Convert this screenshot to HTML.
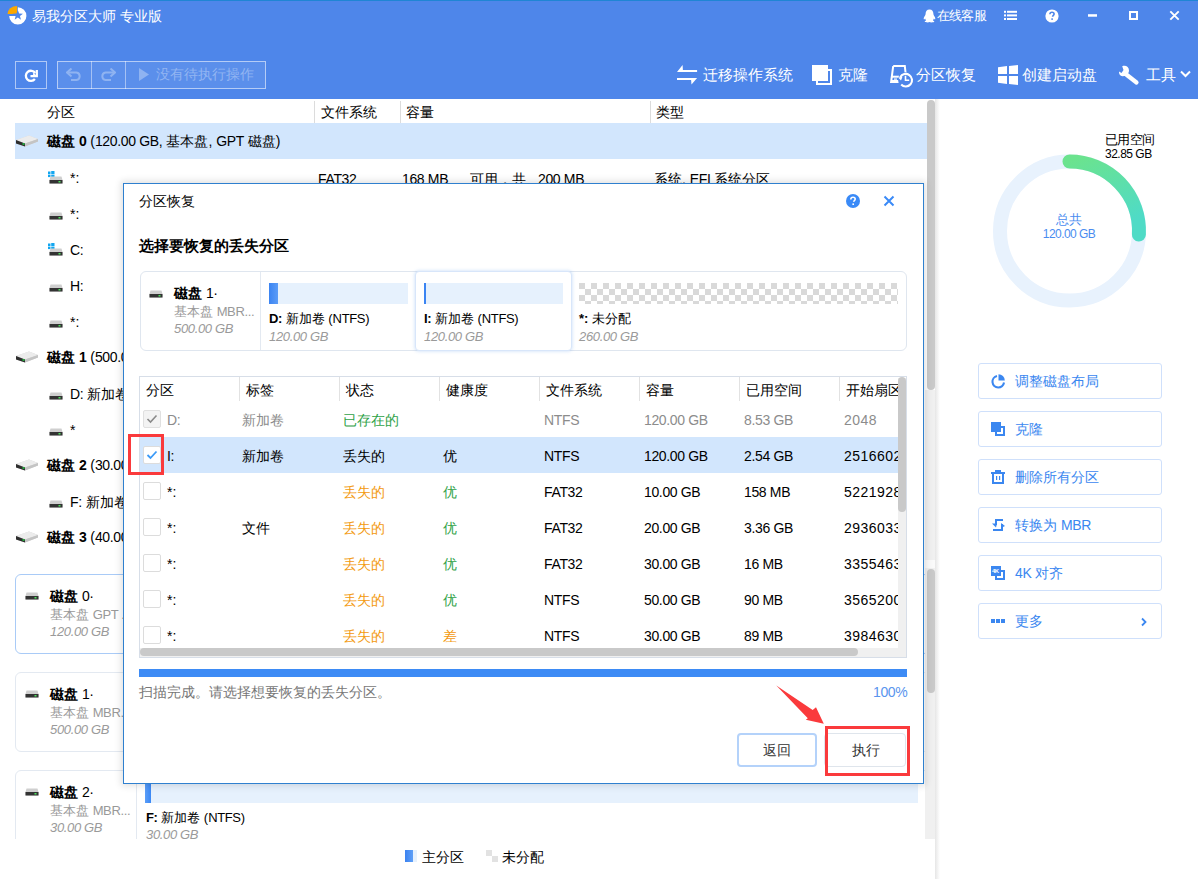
<!DOCTYPE html>
<html><head><meta charset="utf-8">
<style>
*{box-sizing:border-box;margin:0;padding:0}
html,body{width:1198px;height:879px;overflow:hidden;background:#fff}
body{position:relative;font-family:"Liberation Sans",sans-serif;font-size:14px;color:#000}
.a{position:absolute;white-space:nowrap}
#top{position:absolute;left:0;top:0;width:1198px;height:99px;background:#4e86ea;border-top:1px solid #1f85d4}
.w{color:#fff}
.tb{position:absolute;top:61px;height:28px;border:1px solid rgba(255,255,255,.55)}
.lrow{position:absolute;left:0;width:927px;height:36px}
.dk{font-weight:bold}
.card{position:absolute;border:1px solid #e3e9f1;border-radius:6px;background:#fff}
.grey{color:#999}
.it{font-style:italic;color:#9a9a9a}
.rbtn{position:absolute;left:978px;width:184px;height:36px;border:1px solid #cfe0fb;border-radius:3px;color:#3b87f0}
.rbtn .t{position:absolute;left:36px;top:9px;font-size:14px}
.rbtn svg{position:absolute;left:12px;top:10px}
.l{letter-spacing:-0.35px}
</style></head><body>

<!-- Title bar -->
<div id="top"></div>
<svg class="a" style="left:0;top:0" width="34" height="30" viewBox="0 0 34 30">
<path d="M17.8 15.9 V7.300000000000001 A8.6 8.6 0 1 1 9.200000000000001 15.9 Z" fill="#fff"/>
<path d="M17.1 14.1 H7.5 A9.6 8.2 0 0 1 17.1 5.9 Z" fill="#fba800"/>
<path d="M17.80 9.90 L19.15 13.44 L22.94 13.63 L19.99 16.01 L20.97 19.67 L17.80 17.60 L14.63 19.67 L15.61 16.01 L12.66 13.63 L16.45 13.44 Z" fill="#4e86ea"/>
</svg>
<div class="a w" style="left:32px;top:8px;font-size:14px">易我分区大师 专业版</div>

<svg class="a" style="left:923px;top:9px" width="13" height="14" viewBox="0 0 13 14"><path d="M6.5 0.5C3.8 0.5 2.6 2.6 2.6 4.8c0 1-.6 1.8-1.3 3-.8 1.3-.7 2.6-.2 2.7.4.1.8-.5 1-.9.2.8.6 1.4 1 1.9-.8.3-1.4.7-1.4 1.1 0 .6 1.5.9 3 .9 .8 0 1.4-.2 1.8-.4.4.2 1 .4 1.8.4 1.5 0 3-.3 3-.9 0-.4-.6-.8-1.4-1.1.4-.5.8-1.1 1-1.9.2.4.6 1 1 .9.5-.1.6-1.4-.2-2.7-.7-1.2-1.3-2-1.3-3C10.4 2.6 9.2.5 6.5.5z" fill="#fff"/></svg>
<div class="a w" style="left:937px;top:7px;font-size:13px;letter-spacing:-0.8px">在线客服</div>
<svg class="a" style="left:1004px;top:10px" width="14" height="11" viewBox="0 0 14 11"><g fill="#fff"><rect x="0" y="0.8" width="2" height="2"/><rect x="3" y="0.8" width="10" height="2"/><rect x="0" y="4.4" width="2" height="2"/><rect x="3" y="4.4" width="10" height="2"/><rect x="0" y="8" width="2" height="2"/><rect x="3" y="8" width="10" height="2"/></g></svg>
<svg class="a" style="left:1045px;top:9px" width="14" height="14" viewBox="0 0 14 14"><circle cx="7" cy="7" r="6.6" fill="#fff"/><path d="M4.9 5.3c0-1.3.9-2.1 2.1-2.1 1.3 0 2.1.8 2.1 1.8 0 1.3-1.5 1.5-1.5 2.7" stroke="#4e86ea" stroke-width="1.6" fill="none"/><rect x="6.3" y="9.3" width="1.6" height="1.6" fill="#4e86ea"/></svg>
<svg class="a" style="left:1086px;top:10px" width="14" height="10"><rect x="2" y="4.2" width="9" height="2.5" fill="#fff"/></svg>
<div class="a" style="left:1129px;top:11px;width:9px;height:9px;border:2px solid #fff"></div>
<svg class="a" style="left:1169px;top:10px" width="11" height="11" viewBox="0 0 11 11"><path d="M1.3 1.3L9.7 9.7M9.7 1.3L1.3 9.7" stroke="#fff" stroke-width="1.9"/></svg>

<!-- Toolbar -->
<div class="tb" style="left:15px;width:32px"></div>
<svg class="a" style="left:20px;top:64px" width="22" height="22" viewBox="0 0 22 22"><path d="M15.2 9 A5.1 5.1 0 1 0 14.9 15.1" stroke="#fff" stroke-width="2.3" fill="none"/><path d="M16.8 7.2 V12.2 H11.6" stroke="#fff" stroke-width="2.3" fill="none" stroke-linecap="square"/><path d="M13.2 8.3 L16.8 12.2 L13 12.2 Z" fill="#fff"/></svg>
<div class="tb" style="left:57px;width:209px;background:rgba(255,255,255,.08)"></div>
<div class="a" style="left:91px;top:61px;width:1px;height:28px;background:rgba(255,255,255,.45)"></div>
<div class="a" style="left:125px;top:61px;width:1px;height:28px;background:rgba(255,255,255,.45)"></div>
<svg class="a" style="left:66px;top:68px" width="16" height="13" viewBox="0 0 16 13"><path d="M2 4.5H10.5A3.8 3.8 0 0 1 10.5 12H5" stroke="#8fb3f1" stroke-width="2" fill="none"/><path d="M5.5 0.5L1 4.5L5.5 8.5" stroke="#8fb3f1" stroke-width="2" fill="none"/></svg>
<svg class="a" style="left:100px;top:68px" width="16" height="13" viewBox="0 0 16 13"><path d="M14 4.5H5.5A3.8 3.8 0 0 0 5.5 12H11" stroke="#8fb3f1" stroke-width="2" fill="none"/><path d="M10.5 0.5L15 4.5L10.5 8.5" stroke="#8fb3f1" stroke-width="2" fill="none"/></svg>
<svg class="a" style="left:139px;top:68px" width="10" height="13" viewBox="0 0 10 13"><path d="M0 0L10 6.5L0 13Z" fill="#8fb3f1"/></svg>
<div class="a" style="left:156px;top:66px;font-size:14px;color:#92b5f2">没有待执行操作</div>

<!-- toolbar right -->
<svg class="a" style="left:672px;top:60px" width="30" height="30" viewBox="0 0 30 30"><path d="M5 12 L10.6 5 L10.9 10 H25.1 V12 Z" fill="#fff"/><path d="M25.1 18 L19.5 24.6 L19.1 20 H5 V18 Z" fill="#fff"/></svg>
<div class="a w" style="left:703px;top:66px;font-size:14.5px">迁移操作系统</div>
<svg class="a" style="left:806px;top:60px" width="30" height="30" viewBox="0 0 30 30"><rect x="6" y="5" width="16" height="16" fill="#fff"/><path d="M22 10 H25 V24 H11 V21" stroke="#fff" stroke-width="2" fill="none"/></svg>
<div class="a w" style="left:838px;top:66px;font-size:14.5px">克隆</div>
<svg class="a" style="left:884px;top:60px" width="34" height="30" viewBox="0 0 34 30"><path d="M9.2 6.1 H20.8 L21.6 13" stroke="#fff" stroke-width="2" fill="none"/><path d="M9.2 6.1 L7.1 22 H16" stroke="#fff" stroke-width="2" fill="none"/><path d="M7.5 16.7 H15" stroke="#fff" stroke-width="2"/><rect x="7" y="20" width="8" height="2" fill="#fff"/><rect x="10" y="18.5" width="3" height="1.2" fill="#fff"/>
<circle cx="21.5" cy="19.8" r="7.5" fill="#4e86ea"/><path d="M17.2 24.6 A6.3 6.3 0 1 0 16.2 17.2" stroke="#fff" stroke-width="2.1" fill="none"/><path d="M14.2 17.6 L18.5 16.8 L17 20.6 Z" fill="#fff"/><path d="M21.5 15.8 V20.3 H25.2" stroke="#fff" stroke-width="1.6" fill="none"/></svg>
<div class="a w" style="left:916px;top:66px;font-size:14.5px">分区恢复</div>
<svg class="a" style="left:994px;top:60px" width="30" height="30" viewBox="0 0 30 30"><g fill="#fff"><path d="M4 7.2 L13 6.1 V14 H4 Z"/><path d="M15 6.1 L24 5 V14 H15 Z"/><path d="M4 16 H13 V23.9 L4 22.8 Z"/><path d="M15 16 H24 V25 L15 23.9 Z"/></g></svg>
<div class="a w" style="left:1022px;top:66px;font-size:14.5px">创建启动盘</div>
<svg class="a" style="left:1114px;top:60px" width="30" height="30" viewBox="0 0 30 30"><path d="M11 13.5 L22.5 22.5" stroke="#fff" stroke-width="4.2" stroke-linecap="round"/><path d="M8.2 6.2 C11.5 5 15 6.5 15 10.5 C15 14 11.5 16.5 8.5 16.2 C6 16 4.8 14 5 11.5 L7.5 13 L9.5 10 L8.2 6.2 Z" fill="#fff"/></svg>
<div class="a w" style="left:1146px;top:66px;font-size:14.5px">工具</div>
<svg class="a" style="left:1180px;top:70px" width="11" height="8" viewBox="0 0 11 8"><path d="M1 1.5L5.5 6L10 1.5" stroke="#fff" stroke-width="2" fill="none"/></svg>

<!-- MAIN LIST -->
<div class="a" style="left:314px;top:101px;width:1px;height:22px;background:#dcdcdc"></div>
<div class="a" style="left:400px;top:101px;width:1px;height:22px;background:#dcdcdc"></div>
<div class="a" style="left:650px;top:101px;width:1px;height:22px;background:#dcdcdc"></div>
<div class="a" style="left:47px;top:104px">分区</div>
<div class="a" style="left:321px;top:104px">文件系统</div>
<div class="a" style="left:406px;top:104px">容量</div>
<div class="a" style="left:656px;top:104px">类型</div>
<div class="a" style="left:15px;top:123px;width:912px;height:36px;background:#d2e6fd"></div>
<svg class="a" style="left:16px;top:135px" width="23" height="12" viewBox="0 0 23 12"><path d="M0 5 L13 0.5 L22 4 L22 6.5 L9 11.5 L0 8.5 Z" fill="#d4d4d4"/><path d="M0 5 L13 0.5 L22 4 L9 8.5 Z" fill="#ececec"/><path d="M0 5 L9 8.5 L9 11.5 L0 8.5 Z" fill="#2e2e2e"/><path d="M9 8.5 L22 4 L22 6.5 L9 11.5 Z" fill="#c4c4c4"/><rect x="6.5" y="8" width="2" height="2" fill="#22a83a"/></svg>
<div class="a" style="left:47px;top:133px"><b>磁盘 <span class="l">0</span></b> (<span class="l">120.00 GB</span>, 基本盘, <span class="l">GPT</span> 磁盘)</div>
<svg class="a" style="left:48px;top:171px" width="16" height="14" viewBox="0 0 16 14"><g fill="#12a6f0"><rect x="0" y="0.5" width="2.5" height="2.5"/><rect x="3.2" y="0" width="3.3" height="3"/><rect x="0" y="3.6" width="2.5" height="2.5"/><rect x="3.2" y="3.6" width="3.3" height="3"/></g><path d="M2.5 5.5H13.5L14.5 9V12.5H1.5V9Z" fill="#cfcfcf"/><rect x="1.5" y="9" width="13" height="3.5" fill="#333"/><rect x="10.5" y="10" width="2" height="1.5" fill="#4ee25e"/></svg>
<div class="a" style="left:70px;top:170px">*:</div>
<div class="a" style="left:318px;top:171px"><span class="l">FAT32</span></div>
<div class="a" style="left:402px;top:171px"><span class="l">168 MB</span></div><div class="a" style="left:470px;top:171px">可用，共</div><div class="a" style="left:538px;top:171px"><span class="l">200 MB</span></div>
<div class="a" style="left:654px;top:171px">系统, <span class="l">EFI</span> 系统分区</div>
<svg class="a" style="left:49px;top:212px" width="14" height="8" viewBox="0 0 14 8"><path d="M1.5 0.5H12.5L13.5 4V7.5H0.5V4Z" fill="#cfcfcf"/><rect x="0.5" y="4" width="13" height="3.5" fill="#333"/><rect x="9.5" y="5" width="2" height="1.5" fill="#4ee25e"/></svg>
<div class="a" style="left:70px;top:206px">*:</div>
<svg class="a" style="left:48px;top:243px" width="16" height="14" viewBox="0 0 16 14"><g fill="#12a6f0"><rect x="0" y="0.5" width="2.5" height="2.5"/><rect x="3.2" y="0" width="3.3" height="3"/><rect x="0" y="3.6" width="2.5" height="2.5"/><rect x="3.2" y="3.6" width="3.3" height="3"/></g><path d="M2.5 5.5H13.5L14.5 9V12.5H1.5V9Z" fill="#cfcfcf"/><rect x="1.5" y="9" width="13" height="3.5" fill="#333"/><rect x="10.5" y="10" width="2" height="1.5" fill="#4ee25e"/></svg>
<div class="a" style="left:70px;top:242px"><span class="l">C:</span></div>
<svg class="a" style="left:49px;top:284px" width="14" height="8" viewBox="0 0 14 8"><path d="M1.5 0.5H12.5L13.5 4V7.5H0.5V4Z" fill="#cfcfcf"/><rect x="0.5" y="4" width="13" height="3.5" fill="#333"/><rect x="9.5" y="5" width="2" height="1.5" fill="#4ee25e"/></svg>
<div class="a" style="left:70px;top:278px"><span class="l">H:</span></div>
<svg class="a" style="left:49px;top:320px" width="14" height="8" viewBox="0 0 14 8"><path d="M1.5 0.5H12.5L13.5 4V7.5H0.5V4Z" fill="#cfcfcf"/><rect x="0.5" y="4" width="13" height="3.5" fill="#333"/><rect x="9.5" y="5" width="2" height="1.5" fill="#4ee25e"/></svg>
<div class="a" style="left:70px;top:314px">*:</div>
<svg class="a" style="left:16px;top:351px" width="23" height="12" viewBox="0 0 23 12"><path d="M0 5 L13 0.5 L22 4 L22 6.5 L9 11.5 L0 8.5 Z" fill="#d4d4d4"/><path d="M0 5 L13 0.5 L22 4 L9 8.5 Z" fill="#ececec"/><path d="M0 5 L9 8.5 L9 11.5 L0 8.5 Z" fill="#2e2e2e"/><path d="M9 8.5 L22 4 L22 6.5 L9 11.5 Z" fill="#c4c4c4"/><rect x="6.5" y="8" width="2" height="2" fill="#22a83a"/></svg>
<div class="a" style="left:47px;top:349px"><b>磁盘 <span class="l">1</span></b> (<span class="l">500.00 GB</span>, 基本盘, <span class="l">MBR</span> 磁盘)</div>
<svg class="a" style="left:49px;top:392px" width="14" height="8" viewBox="0 0 14 8"><path d="M1.5 0.5H12.5L13.5 4V7.5H0.5V4Z" fill="#cfcfcf"/><rect x="0.5" y="4" width="13" height="3.5" fill="#333"/><rect x="9.5" y="5" width="2" height="1.5" fill="#4ee25e"/></svg>
<div class="a" style="left:70px;top:386px"><span class="l">D:</span> 新加卷</div>
<svg class="a" style="left:49px;top:428px" width="14" height="8" viewBox="0 0 14 8"><path d="M1.5 0.5H12.5L13.5 4V7.5H0.5V4Z" fill="#cfcfcf"/><rect x="0.5" y="4" width="13" height="3.5" fill="#333"/><rect x="9.5" y="5" width="2" height="1.5" fill="#4ee25e"/></svg>
<div class="a" style="left:70px;top:422px">*</div>
<svg class="a" style="left:16px;top:459px" width="23" height="12" viewBox="0 0 23 12"><path d="M0 5 L13 0.5 L22 4 L22 6.5 L9 11.5 L0 8.5 Z" fill="#d4d4d4"/><path d="M0 5 L13 0.5 L22 4 L9 8.5 Z" fill="#ececec"/><path d="M0 5 L9 8.5 L9 11.5 L0 8.5 Z" fill="#2e2e2e"/><path d="M9 8.5 L22 4 L22 6.5 L9 11.5 Z" fill="#c4c4c4"/><rect x="6.5" y="8" width="2" height="2" fill="#22a83a"/></svg>
<div class="a" style="left:47px;top:457px"><b>磁盘 <span class="l">2</span></b> (<span class="l">30.00 GB</span>, 基本盘, <span class="l">MBR</span> 磁盘)</div>
<svg class="a" style="left:49px;top:500px" width="14" height="8" viewBox="0 0 14 8"><path d="M1.5 0.5H12.5L13.5 4V7.5H0.5V4Z" fill="#cfcfcf"/><rect x="0.5" y="4" width="13" height="3.5" fill="#333"/><rect x="9.5" y="5" width="2" height="1.5" fill="#4ee25e"/></svg>
<div class="a" style="left:70px;top:494px"><span class="l">F:</span> 新加卷</div>
<svg class="a" style="left:16px;top:531px" width="23" height="12" viewBox="0 0 23 12"><path d="M0 5 L13 0.5 L22 4 L22 6.5 L9 11.5 L0 8.5 Z" fill="#d4d4d4"/><path d="M0 5 L13 0.5 L22 4 L9 8.5 Z" fill="#ececec"/><path d="M0 5 L9 8.5 L9 11.5 L0 8.5 Z" fill="#2e2e2e"/><path d="M9 8.5 L22 4 L22 6.5 L9 11.5 Z" fill="#c4c4c4"/><rect x="6.5" y="8" width="2" height="2" fill="#22a83a"/></svg>
<div class="a" style="left:47px;top:529px"><b>磁盘 <span class="l">3</span></b> (<span class="l">40.00 GB</span>, 基本盘, <span class="l">MBR</span> 磁盘)</div>
<div class="a" style="left:0;top:562px;width:927px;height:277px;overflow:hidden">
<div class="card" style="left:15px;top:12px;width:915px;height:80px;border-color:#a9cbf7"></div>
<div class="a" style="left:136px;top:12px;width:1px;height:80px;background:#e3e9f1"></div>
<svg class="a" style="left:25px;top:30px" width="14" height="8" viewBox="0 0 14 8"><path d="M1.5 0.5H12.5L13.5 4V7.5H0.5V4Z" fill="#cfcfcf"/><rect x="0.5" y="4" width="13" height="3.5" fill="#333"/><rect x="9.5" y="5" width="2" height="1.5" fill="#4ee25e"/></svg>
<div class="a" style="left:50px;top:26px"><b>磁盘</b> <span class="l">0·</span></div>
<div class="a grey" style="left:50px;top:44px;font-size:13px">基本盘 <span class="l">GPT ...</span></div>
<div class="a it" style="left:50px;top:62px;font-size:13px"><span class="l">120.00 GB</span></div>
<div class="card" style="left:15px;top:110px;width:915px;height:80px;border-color:#e3e9f1"></div>
<div class="a" style="left:136px;top:110px;width:1px;height:80px;background:#e3e9f1"></div>
<svg class="a" style="left:25px;top:128px" width="14" height="8" viewBox="0 0 14 8"><path d="M1.5 0.5H12.5L13.5 4V7.5H0.5V4Z" fill="#cfcfcf"/><rect x="0.5" y="4" width="13" height="3.5" fill="#333"/><rect x="9.5" y="5" width="2" height="1.5" fill="#4ee25e"/></svg>
<div class="a" style="left:50px;top:124px"><b>磁盘</b> <span class="l">1·</span></div>
<div class="a grey" style="left:50px;top:142px;font-size:13px">基本盘 <span class="l">MBR...</span></div>
<div class="a it" style="left:50px;top:160px;font-size:13px"><span class="l">500.00 GB</span></div>
<div class="card" style="left:15px;top:208px;width:915px;height:80px;border-color:#e3e9f1"></div>
<div class="a" style="left:136px;top:208px;width:1px;height:80px;background:#e3e9f1"></div>
<svg class="a" style="left:25px;top:226px" width="14" height="8" viewBox="0 0 14 8"><path d="M1.5 0.5H12.5L13.5 4V7.5H0.5V4Z" fill="#cfcfcf"/><rect x="0.5" y="4" width="13" height="3.5" fill="#333"/><rect x="9.5" y="5" width="2" height="1.5" fill="#4ee25e"/></svg>
<div class="a" style="left:50px;top:222px"><b>磁盘</b> <span class="l">2·</span></div>
<div class="a grey" style="left:50px;top:240px;font-size:13px">基本盘 <span class="l">MBR...</span></div>
<div class="a it" style="left:50px;top:258px;font-size:13px"><span class="l">30.00 GB</span></div>
<div class="a" style="left:146px;top:220px;width:772px;height:21px;background:#e6f1fd"></div>
<div class="a" style="left:145px;top:220px;width:6px;height:21px;background:linear-gradient(90deg,#5b9ef8,#3b88f5)"></div>
<div class="a" style="left:146px;top:247px;font-size:13px"><b><span class="l">F:</span></b> 新加卷 (<span class="l">NTFS)</span></div>
<div class="a it" style="left:146px;top:265px;font-size:13px"><span class="l">30.00 GB</span></div>
</div>
<div class="a" style="left:405px;top:850px;width:8px;height:12px;background:linear-gradient(90deg,#3b82f0,#5fa0f7)"></div><div class="a" style="left:413px;top:850px;width:4px;height:12px;background:#e6f1fd"></div>
<div class="a" style="left:422px;top:849px">主分区</div>
<svg class="a" style="left:486px;top:850px" width="12" height="12"><rect x="0" y="0" width="6" height="6" fill="#e2e2e2"/><rect x="6" y="6" width="6" height="6" fill="#e2e2e2"/></svg>
<div class="a" style="left:502px;top:849px">未分配</div>
<div class="a" style="left:927px;top:100px;width:8px;height:290px;border-radius:4px;background:#c9c9c9"></div>
<div class="a" style="left:925px;top:390px;width:10px;height:170px;background:#f0f0f0"></div>
<div class="a" style="left:925px;top:568px;width:10px;height:271px;background:#f0f0f0"></div><div class="a" style="left:925px;top:560px;width:10px;height:8px;background:#fafafa"></div>
<div class="a" style="left:927px;top:569px;width:8px;height:124px;border-radius:4px;background:#c9c9c9"></div>
<div class="a" style="left:935px;top:99px;width:5px;height:780px;background:linear-gradient(90deg,#e6e6e6,#fff)"></div>

<!-- RIGHT PANEL -->
<svg class="a" style="left:985px;top:146px" width="170" height="170" viewBox="0 0 170 170">
<defs><linearGradient id="gg" x1="0" y1="0" x2="0.4" y2="1"><stop offset="0" stop-color="#6be38e"/><stop offset="1" stop-color="#4fdbc6"/></linearGradient></defs>
<circle cx="84.5" cy="85" r="69.5" stroke="#e8f2fd" stroke-width="14" fill="none"/>
<path d="M84.5 15.5 A69.5 69.5 0 0 1 153.9 88.5" stroke="url(#gg)" stroke-width="14" fill="none" stroke-linecap="round"/>
</svg>
<div class="a" style="left:1105px;top:131px;font-size:13px;letter-spacing:-0.7px">已用空间</div>
<div class="a" style="left:1105px;top:147px;font-size:12px"><span class="l" style="letter-spacing:-0.5px">32.85 GB</span></div>
<div class="a" style="left:1019px;top:211px;width:100px;text-align:center;color:#4a8cf0;font-size:13px">总共</div>
<div class="a" style="left:1019px;top:227px;width:100px;text-align:center;color:#4a8cf0;font-size:12px"><span class="l" style="letter-spacing:-0.55px">120.00 GB</span></div>
<div class="rbtn" style="top:363px"><svg width="15" height="15" viewBox="0 0 15 15"><path d="M6 2 A5.8 5.8 0 1 0 13 8.5" stroke="#3b87f0" stroke-width="2.1" fill="none"/><path d="M7.5 0.2 A6.3 6.3 0 0 1 13.8 6.5 H7.5 Z" fill="#3b87f0"/></svg><div class="t">调整磁盘布局</div></div>
<div class="rbtn" style="top:411px"><svg width="15" height="15" viewBox="0 0 15 15"><rect x="0" y="0" width="10" height="10" fill="#3b87f0"/><path d="M10 5 H13 V13 H5 V10" stroke="#3b87f0" stroke-width="2" fill="none"/></svg><div class="t">克隆</div></div>
<div class="rbtn" style="top:459px"><svg width="15" height="15" viewBox="0 0 15 15"><rect x="4" y="0" width="6" height="2" fill="#3b87f0"/><rect x="0" y="2" width="14" height="2" fill="#3b87f0"/><path d="M2 4 V13 H12 V4" stroke="#3b87f0" stroke-width="2" fill="none"/><rect x="5" y="6" width="1.2" height="4" fill="#3b87f0"/><rect x="8" y="6" width="1.2" height="4" fill="#3b87f0"/></svg><div class="t">删除所有分区</div></div>
<div class="rbtn" style="top:507px"><svg width="15" height="15" viewBox="0 0 15 15"><g transform="translate(0 1)"><path d="M12 1 H5 V6" stroke="#3b87f0" stroke-width="2" fill="none"/><path d="M1 4.5 L6 4.5 L5 8.5 Z" fill="#3b87f0"/><path d="M2 11 H11 V5" stroke="#3b87f0" stroke-width="2" fill="none"/><path d="M10 4 L14 7 L10 9 Z" fill="#3b87f0"/></g></svg><div class="t">转换为 <span class="l">MBR</span></div></div>
<div class="rbtn" style="top:555px"><svg width="15" height="15" viewBox="0 0 15 15"><rect x="0" y="0" width="10" height="10" fill="#3b87f0"/><text x="1" y="7.2" font-size="6" font-family="Liberation Sans" font-weight="bold" fill="#fff" letter-spacing="-0.5">4K</text><path d="M10 5 H13 V13 H5 V10" stroke="#3b87f0" stroke-width="2" fill="none"/></svg><div class="t"><span class="l">4K</span> 对齐</div></div>
<div class="rbtn" style="top:603px"><svg width="15" height="15" viewBox="0 0 15 15"><rect x="0" y="5" width="4" height="4" fill="#3b87f0"/><rect x="5" y="5" width="4" height="4" fill="#3b87f0"/><rect x="10" y="5" width="4" height="4" fill="#3b87f0"/></svg><div class="t">更多</div><svg style="position:absolute;left:161px;top:13px" width="8" height="10" viewBox="0 0 8 10"><path d="M2 1.5L5.5 5L2 8.5" stroke="#3b87f0" stroke-width="1.8" fill="none"/></svg></div>

<!-- DIALOG -->
<div class="a" style="left:123px;top:183px;width:801px;height:601px;background:#fff;border:1px solid #2f80cf;box-shadow:0 0 7px 2px rgba(0,0,0,.12)"></div>
<div class="a" style="left:139px;top:193px;font-size:14px">分区恢复</div>
<svg class="a" style="left:846px;top:194px" width="14" height="14" viewBox="0 0 14 14"><circle cx="7" cy="7" r="7" fill="#3a8af7"/><path d="M4.8 5.4c0-1.4.9-2.2 2.2-2.2 1.3 0 2.2.8 2.2 1.9 0 1.4-1.5 1.5-1.5 2.7" stroke="#fff" stroke-width="1.6" fill="none"/><rect x="6.4" y="9.4" width="1.6" height="1.6" fill="#fff"/></svg>
<svg class="a" style="left:883px;top:195px" width="12" height="12" viewBox="0 0 12 12"><path d="M1.5 1.5L10.5 10.5M10.5 1.5L1.5 10.5" stroke="#3a8af7" stroke-width="2"/></svg>
<div class="a" style="left:139px;top:237px;font-size:15px;font-weight:bold">选择要恢复的丢失分区</div>
<div class="card" style="left:140px;top:271px;width:767px;height:80px;border-color:#dfe6ef"></div>
<div class="a" style="left:260px;top:272px;width:1px;height:78px;background:#e3e9f1"></div>
<svg class="a" style="left:149px;top:290px" width="14" height="8" viewBox="0 0 14 8"><path d="M1.5 0.5H12.5L13.5 4V7.5H0.5V4Z" fill="#cfcfcf"/><rect x="0.5" y="4" width="13" height="3.5" fill="#333"/><rect x="9.5" y="5" width="2" height="1.5" fill="#4ee25e"/></svg>
<div class="a" style="left:174px;top:285px"><b>磁盘</b> <span class="l">1·</span></div>
<div class="a grey" style="left:174px;top:303px;font-size:13px">基本盘 <span class="l">MBR...</span></div>
<div class="a it" style="left:174px;top:321px;font-size:13px"><span class="l">500.00 GB</span></div>
<div class="a" style="left:269px;top:283px;width:139px;height:21px;background:#e6f1fd"></div>
<div class="a" style="left:269px;top:283px;width:9px;height:21px;background:linear-gradient(90deg,#3b84f2,#5b9cf7)"></div>
<div class="a" style="left:269px;top:310px;font-size:13px"><b><span class="l">D:</span></b> 新加卷 (<span class="l">NTFS)</span></div>
<div class="a it" style="left:269px;top:329px;font-size:13px"><span class="l">120.00 GB</span></div>
<div class="a" style="left:415px;top:271px;width:157px;height:80px;border:1px solid #d8e6fa;border-radius:4px;background:#fff;box-shadow:0 0 3px 1px rgba(120,170,240,.25)"></div>
<div class="a" style="left:424px;top:283px;width:139px;height:21px;background:#e6f1fd"></div>
<div class="a" style="left:424px;top:283px;width:2px;height:21px;background:#3b84f2"></div>
<div class="a" style="left:424px;top:310px;font-size:13px"><b><span class="l">I:</span></b> 新加卷 (<span class="l">NTFS)</span></div>
<div class="a it" style="left:424px;top:329px;font-size:13px"><span class="l">120.00 GB</span></div>
<div class="a" style="left:579px;top:283px;width:319px;height:21px;background:conic-gradient(#fff 25%,#d9d9d9 0 50%,#fff 0 75%,#d9d9d9 0) 0 0/12px 12px"></div>
<div class="a" style="left:579px;top:310px;font-size:13px"><b>*:</b> 未分配</div>
<div class="a it" style="left:579px;top:329px;font-size:13px"><span class="l">260.00 GB</span></div>
<div class="a" style="left:139px;top:376px;width:768px;height:282px;border:1px solid #d7dee8"></div>
<div class="a" style="left:239px;top:377px;width:1px;height:24px;background:#e2e2e2"></div>
<div class="a" style="left:339px;top:377px;width:1px;height:24px;background:#e2e2e2"></div>
<div class="a" style="left:439px;top:377px;width:1px;height:24px;background:#e2e2e2"></div>
<div class="a" style="left:539px;top:377px;width:1px;height:24px;background:#e2e2e2"></div>
<div class="a" style="left:639px;top:377px;width:1px;height:24px;background:#e2e2e2"></div>
<div class="a" style="left:739px;top:377px;width:1px;height:24px;background:#e2e2e2"></div>
<div class="a" style="left:839px;top:377px;width:1px;height:24px;background:#e2e2e2"></div>
<div class="a" style="left:140px;top:378px;width:758px;height:270px;overflow:hidden">
<div class="a" style="left:6px;top:4px">分区</div>
<div class="a" style="left:106px;top:4px">标签</div>
<div class="a" style="left:206px;top:4px">状态</div>
<div class="a" style="left:306px;top:4px">健康度</div>
<div class="a" style="left:406px;top:4px">文件系统</div>
<div class="a" style="left:506px;top:4px">容量</div>
<div class="a" style="left:606px;top:4px">已用空间</div>
<div class="a" style="left:706px;top:4px">开始扇区</div>
<div class="a" style="left:0;top:59px;width:758px;height:36px;background:#d2e6fd"></div>
<div class="a" style="left:3px;top:32px;width:18px;height:18px;border:1px solid #e0e0e0;border-radius:2px;background:#f3f3f3"></div>
<svg class="a" style="left:6px;top:36px" width="12" height="10" viewBox="0 0 12 10"><path d="M1.5 5L4.5 8L10.5 1.5" stroke="#8a8a8a" stroke-width="1.6" fill="none"/></svg>
<div class="a" style="left:27px;top:34px;color:#8c8c8c"><span class="l">D:</span></div>
<div class="a" style="left:102px;top:34px;color:#8c8c8c">新加卷</div>
<div class="a" style="left:203px;top:34px;color:#2fa247">已存在的</div>
<div class="a" style="left:303px;top:34px;color:#000"></div>
<div class="a" style="left:404px;top:34px;color:#8c8c8c"><span class="l">NTFS</span></div>
<div class="a" style="left:504px;top:34px;color:#8c8c8c"><span class="l">120.00 GB</span></div>
<div class="a" style="left:604px;top:34px;color:#8c8c8c"><span class="l">8.53 GB</span></div>
<div class="a" style="left:704px;top:34px;color:#8c8c8c"><span style="letter-spacing:0.45px">2048</span></div>
<div class="a" style="left:3px;top:68px;width:18px;height:18px;border:1px solid #dcdcdc;border-radius:2px;background:#fff"></div>
<svg class="a" style="left:6px;top:72px" width="12" height="10" viewBox="0 0 12 10"><path d="M1.5 5L4.5 8L10.5 1.5" stroke="#3b9af7" stroke-width="1.8" fill="none"/></svg>
<div class="a" style="left:27px;top:70px;color:#000"><span class="l">I:</span></div>
<div class="a" style="left:102px;top:70px;color:#000">新加卷</div>
<div class="a" style="left:203px;top:70px;color:#000">丢失的</div>
<div class="a" style="left:303px;top:70px;color:#000">优</div>
<div class="a" style="left:404px;top:70px;color:#000"><span class="l">NTFS</span></div>
<div class="a" style="left:504px;top:70px;color:#000"><span class="l">120.00 GB</span></div>
<div class="a" style="left:604px;top:70px;color:#000"><span class="l">2.54 GB</span></div>
<div class="a" style="left:704px;top:70px;color:#000"><span style="letter-spacing:0.45px">2516602</span></div>
<div class="a" style="left:3px;top:104px;width:18px;height:18px;border:1px solid #dcdcdc;border-radius:2px;background:#fff"></div>
<div class="a" style="left:27px;top:106px;color:#000">*:</div>
<div class="a" style="left:102px;top:106px;color:#000"></div>
<div class="a" style="left:203px;top:106px;color:#f39a10">丢失的</div>
<div class="a" style="left:303px;top:106px;color:#2fa247">优</div>
<div class="a" style="left:404px;top:106px;color:#000"><span class="l">FAT32</span></div>
<div class="a" style="left:504px;top:106px;color:#000"><span class="l">10.00 GB</span></div>
<div class="a" style="left:604px;top:106px;color:#000"><span class="l">158 MB</span></div>
<div class="a" style="left:704px;top:106px;color:#000"><span style="letter-spacing:0.45px">5221928</span></div>
<div class="a" style="left:3px;top:140px;width:18px;height:18px;border:1px solid #dcdcdc;border-radius:2px;background:#fff"></div>
<div class="a" style="left:27px;top:142px;color:#000">*:</div>
<div class="a" style="left:102px;top:142px;color:#000">文件</div>
<div class="a" style="left:203px;top:142px;color:#f39a10">丢失的</div>
<div class="a" style="left:303px;top:142px;color:#2fa247">优</div>
<div class="a" style="left:404px;top:142px;color:#000"><span class="l">FAT32</span></div>
<div class="a" style="left:504px;top:142px;color:#000"><span class="l">20.00 GB</span></div>
<div class="a" style="left:604px;top:142px;color:#000"><span class="l">3.36 GB</span></div>
<div class="a" style="left:704px;top:142px;color:#000"><span style="letter-spacing:0.45px">2936033</span></div>
<div class="a" style="left:3px;top:176px;width:18px;height:18px;border:1px solid #dcdcdc;border-radius:2px;background:#fff"></div>
<div class="a" style="left:27px;top:178px;color:#000">*:</div>
<div class="a" style="left:102px;top:178px;color:#000"></div>
<div class="a" style="left:203px;top:178px;color:#f39a10">丢失的</div>
<div class="a" style="left:303px;top:178px;color:#2fa247">优</div>
<div class="a" style="left:404px;top:178px;color:#000"><span class="l">FAT32</span></div>
<div class="a" style="left:504px;top:178px;color:#000"><span class="l">30.00 GB</span></div>
<div class="a" style="left:604px;top:178px;color:#000"><span class="l">16 MB</span></div>
<div class="a" style="left:704px;top:178px;color:#000"><span style="letter-spacing:0.45px">3355463</span></div>
<div class="a" style="left:3px;top:212px;width:18px;height:18px;border:1px solid #dcdcdc;border-radius:2px;background:#fff"></div>
<div class="a" style="left:27px;top:214px;color:#000">*:</div>
<div class="a" style="left:102px;top:214px;color:#000"></div>
<div class="a" style="left:203px;top:214px;color:#f39a10">丢失的</div>
<div class="a" style="left:303px;top:214px;color:#2fa247">优</div>
<div class="a" style="left:404px;top:214px;color:#000"><span class="l">NTFS</span></div>
<div class="a" style="left:504px;top:214px;color:#000"><span class="l">50.00 GB</span></div>
<div class="a" style="left:604px;top:214px;color:#000"><span class="l">90 MB</span></div>
<div class="a" style="left:704px;top:214px;color:#000"><span style="letter-spacing:0.45px">3565200</span></div>
<div class="a" style="left:3px;top:248px;width:18px;height:18px;border:1px solid #dcdcdc;border-radius:2px;background:#fff"></div>
<div class="a" style="left:27px;top:250px;color:#000">*:</div>
<div class="a" style="left:102px;top:250px;color:#000"></div>
<div class="a" style="left:203px;top:250px;color:#f39a10">丢失的</div>
<div class="a" style="left:303px;top:250px;color:#f39a10">差</div>
<div class="a" style="left:404px;top:250px;color:#000"><span class="l">NTFS</span></div>
<div class="a" style="left:504px;top:250px;color:#000"><span class="l">30.00 GB</span></div>
<div class="a" style="left:604px;top:250px;color:#000"><span class="l">89 MB</span></div>
<div class="a" style="left:704px;top:250px;color:#000"><span style="letter-spacing:0.45px">3984630</span></div>
</div>
<div class="a" style="left:898px;top:378px;width:8px;height:279px;background:#f0f0f0"></div>
<div class="a" style="left:898px;top:377px;width:8px;height:135px;border-radius:4px;background:#c9c9c9"></div>
<div class="a" style="left:140px;top:648px;width:766px;height:9px;background:#f0f0f0"></div>
<div class="a" style="left:140px;top:648px;width:718px;height:8px;border-radius:4px;background:#c9c9c9"></div>
<div class="a" style="left:139px;top:669px;width:768px;height:8px;background:#3d8bf5"></div>
<div class="a" style="left:139px;top:684px;color:#777">扫描完成。请选择想要恢复的丢失分区。</div>
<div class="a" style="left:873px;top:684px;color:#5a95ee"><span class="l">100%</span></div>
<div class="a" style="left:737px;top:733px;width:80px;height:34px;border:2px solid #b4d2fa;border-radius:4px;text-align:center;line-height:30px;color:#333">返回</div>
<div class="a" style="left:824px;top:733px;width:82px;height:34px;border:1px solid #dfe5ec;border-radius:4px;text-align:center;line-height:32px;color:#333;padding-left:2px">执行</div>
<div class="a" style="left:825px;top:726px;width:85px;height:50px;border:3px solid #fa3a3c"></div>
<div class="a" style="left:128px;top:434px;width:36px;height:41px;border:3px solid #fa3a3c"></div>
<svg class="a" style="left:770px;top:680px" width="60" height="50" viewBox="0 0 60 50"><path d="M6.3 5.4 L42.7 30.1 L46 27.3 L53.8 43.8 L35.8 39.8 L37.8 38.3 Z" fill="#fa3a3c"/></svg>

</body></html>
